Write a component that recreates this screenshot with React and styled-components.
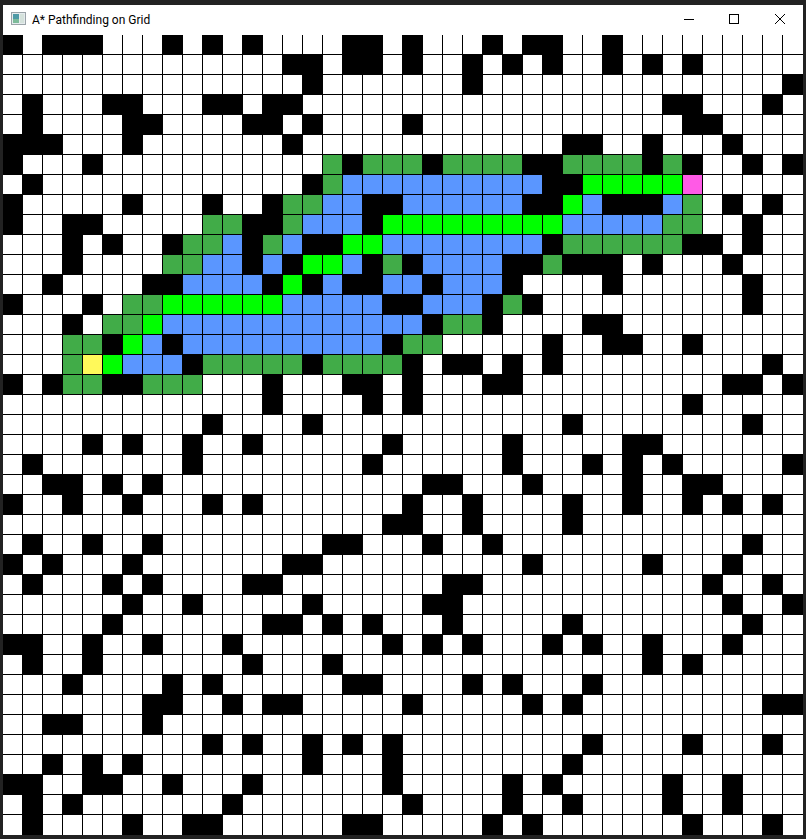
import styled, { createGlobalStyle } from 'styled-components'

const GlobalStyle = createGlobalStyle`
  html, body {
    margin: 0;
    padding: 0;
    background: #222222;
  }
`

const COLORS = {
  '.': '#ffffff',
  '#': '#000000',
  g: '#41ac48',
  b: '#5a96ff',
  P: '#00ff00',
  S: '#fff95a',
  E: '#ff5ae6',
}

// one string per row: # wall, g open set, b closed set, P path, S start, E end
const GRID = [
  '#.###...#.#.#....##.#...#.##..#.........',
  '..............##.##.#..#.#.#..#.#.#.....',
  '...............#.......#...............#',
  '.#...##...##.##..................##...#.',
  '.#....##....##.#....#.............##....',
  '###...#.......#.............##..#...#...',
  '#...#...........g#ggg#gggg##gggg#g#..#.#',
  '.#.............#gbbbbbbbbbb##PPPPPE.....',
  '#.....#...#..#ggbb##bbbbbb##Pb###bg.#.#.',
  '#..##.....gg##gbbb#PPPPPPPPPbbbbbgg..#..',
  '...#.#..#ggb#gb##PPbbbbbbbb#gggggg##.#..',
  '...#....ggbb#b#PPb#g#bbbb##g###.#...#...',
  '..#....##bbbb#P#b##bb#bbb#....#......#..',
  '#...#.ggPPPPPPbbbbb##bbb#g#..........#..',
  '...#.ggPbbbbbbbbbbbbb#gg#....##.........',
  '...gg#Pb#bbbbbbbbbb#gg.....#..##..#.....',
  '...gSPbbb#ggggg#gggg#.##.#.#..........#.',
  '#.#gg##ggg...#...##.#...##..........##.#',
  '.............#....#.#.............#.....',
  '..........#....#............#........#..',
  '....#.#..#..#......#.....#.....##.......',
  '.#.......#........#......#...#.#.#.....#',
  '..##.#.#.............##...#....#..##....',
  '#..#..#...#.#.......#..#....#..#..#.#.#.',
  '...................##..#....#...........',
  '.#..#..#........##...#..#............#..',
  '#.#...#.......##..........#.....#...#...',
  '.#...#.#....##........##...........#..#.',
  '......#..#.....#.....##.............#..#',
  '.....#.......##.#.#...#.....#........#..',
  '##..#..#...#.......#.#.#...#.#..#...#...',
  '.#..#.......#...#...............#.#.....',
  '...#....#.#......##....#.#...#..........',
  '.......##..#.##.....#.....#.#.........##',
  '..##...#................................',
  '..........#.#..#.#.#.........#....#...#.',
  '..#.#.#........#...#........#...........',
  '##..##..#...#......#.....#.#.....#..#...',
  '.#.#.......#........#....#..#....#..#...',
  '.#....#..##......##.....#.#.......#...#.',
]

const Frame = styled.div`
  width: 800px;
  height: 830px;
  padding: 5px 3px 4px;
  background: #222222;
  display: flex;
  flex-direction: column;
`

const TitleBar = styled.header`
  height: 30px;
  flex: none;
  background: #ffffff;
  display: flex;
  align-items: center;
  font-family: Roboto, 'Liberation Sans', sans-serif;
  font-size: 12px;
  color: #000000;
`

const AppIcon = styled.svg`
  width: 15px;
  height: 13px;
  margin: 0 0 3px 8px;
  flex: none;
`

const Title = styled.span`
  margin-left: 6px;
  flex: 1;
  white-space: nowrap;
`

const WindowButton = styled.button`
  width: 46px;
  height: 30px;
  padding: 0 0 2px;
  border: 0;
  background: transparent;
  display: flex;
  align-items: center;
  justify-content: center;
`

const ButtonGlyph = styled.svg`
  width: 12px;
  height: 12px;
  display: block;
`

const Board = styled.main`
  display: grid;
  grid-template-columns: repeat(40, 20px);
  grid-auto-rows: 20px;
  width: 800px;
  height: 800px;
`

const Cell = styled.div`
  background: ${({ $kind }) => COLORS[$kind]};
  border-right: ${({ $lastCol }) => ($lastCol ? '0' : '1px solid #000000')};
  border-bottom: ${({ $lastRow }) => ($lastRow ? '0' : '1px solid #000000')};
  box-sizing: border-box;
`

export default function App() {
  return (
    <Frame>
      <GlobalStyle />
      <TitleBar>
        <AppIcon viewBox="0 0 15 13">
          <rect x="0.5" y="0.5" width="14" height="12" fill="#e6ecee" stroke="#9aa3a8" />
          <rect x="2" y="2" width="6" height="9" fill="#4f9aa6" />
          <rect x="2" y="7" width="6" height="4" fill="#7dbb9a" />
          <rect x="9" y="2" width="4" height="9" fill="#d5e2dc" />
        </AppIcon>
        <Title>A* Pathfinding on Grid</Title>
        <WindowButton aria-label="Minimize">
          <ButtonGlyph viewBox="0 0 12 12">
            <path d="M2 6.5H12" stroke="#000" fill="none" />
          </ButtonGlyph>
        </WindowButton>
        <WindowButton aria-label="Maximize">
          <ButtonGlyph viewBox="0 0 12 12">
            <rect x="1.5" y="1.5" width="9" height="9" stroke="#000" fill="none" />
          </ButtonGlyph>
        </WindowButton>
        <WindowButton aria-label="Close">
          <ButtonGlyph viewBox="0 0 12 12">
            <path d="M1 1L11 11M11 1L1 11" stroke="#000" fill="none" />
          </ButtonGlyph>
        </WindowButton>
      </TitleBar>
      <Board>
        {GRID.flatMap((row, r) =>
          row.split('').map((kind, c) => (
            <Cell key={`${r}-${c}`} $kind={kind} $lastCol={c === 39} $lastRow={r === 39} />
          ))
        )}
      </Board>
    </Frame>
  )
}
